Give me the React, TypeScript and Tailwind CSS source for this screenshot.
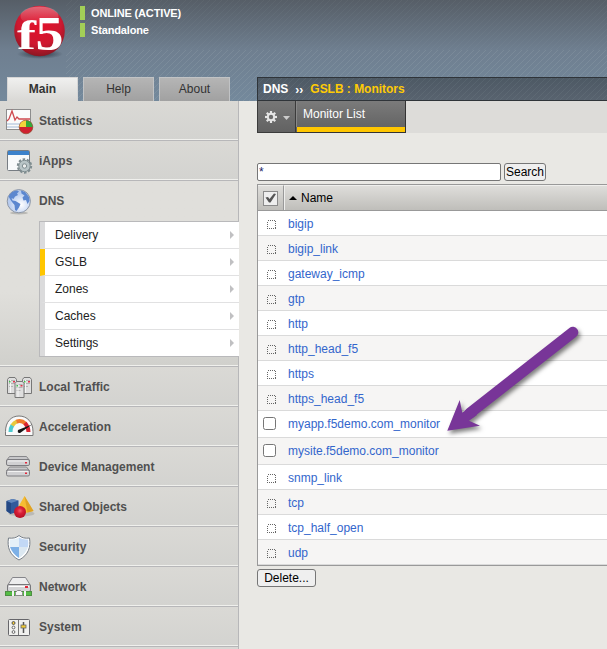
import React from 'react';

const icons: Record<string, React.ReactNode> = {
  Statistics: (
    <>
      <rect x="2.5" y="2.5" width="24" height="20" fill="#fbfbfb" stroke="#8d8d8d" />
      <path d="M3 17h23M3 20h23" stroke="#cfdbea" strokeWidth="2" />
      <path d="M3 14l2-2 3-8 3 9 2-3 2 2h11" fill="none" stroke="#cf4a50" strokeWidth="1.3" />
      <circle cx="22" cy="20" r="6.800" fill="#cf2230" stroke="#8c4a2c" strokeWidth=".7" />
      <path d="M22 20V13.400a6.600 6.600 0 0 1 6.600 6.600z" fill="#35a83a" />
      <path d="M22 20h-6.600a6.600 6.600 0 0 1 6.600-6.600z" fill="#f3d53a" />
    </>
  ),
  iApps: (
    <>
      <rect x="3.500" y="3.500" width="22" height="20" rx="1" fill="#f8fafb" stroke="#777d83" />
      <rect x="4" y="4" width="21" height="4" fill="#3c82cb" />
      <circle cx="20.500" cy="19" r="6.600" fill="none" stroke="#7f8d90" strokeWidth="2.200" strokeDasharray="2.500 1.650" />
      <circle cx="20.500" cy="19" r="5.700" fill="#b8c4c6" stroke="#7f8d90" />
      <circle cx="20.500" cy="19" r="2.200" fill="#eceeed" stroke="#7f8d90" />
    </>
  ),
  DNS: (
    <>
      <ellipse cx="15" cy="26" rx="9" ry="1.500" fill="#b9b8b4" />
      <circle cx="14.800" cy="14.200" r="11.600" fill="url(#globe)" stroke="#8d96a5" />
      <path d="M4.500 9.500c2-4 5-6 8.500-6l2 1-2 2 1 1.500-3 1.500-1.500 2.500-2-1 1 2.500 3 .5 5 3-1.500 3.500-2.500 3.500-1.500-1-.5-5-2.500-3-2-3zM17 3.500l4 1.500 4 5 .5 4-2 3-1.500-4-2.500.5-1-3 2-2-3-2z" fill="#5c87cf" />
    </>
  ),
  'Local Traffic': (
    <>
      {[[3, 4], [18, 4], [10.5, 8]].map(([x, y]) => (
        <g key={x} transform={`translate(${x} ${y})`}>
          <path d="M.5 2.500L2 .5h6l1.500 2v14h-9z" fill="#dedede" stroke="#777" />
          <path d="M2 3.500h6M2 6.500h6M2 9.500h4" stroke="#b3b3b3" />
          <path d="M3.500 3v13" stroke="#f6f6f6" />
          <rect x="6" y="4" width="2" height="1.500" fill="#e3334b" />
          <rect x="2" y="4" width="1.500" height="1.500" fill="#3fc14b" />
        </g>
      ))}
    </>
  ),
  Acceleration: (
    <g transform="translate(0 -1)">
      <path d="M1.500 23.500v-4C1.500 10 7 4 15 4s14 6 14 15.500v4z" fill="#fafafa" stroke="#777" strokeLinejoin="round" />
      <path d="M6.500 20q0-4 2-6.800" fill="none" stroke="#4cc9cf" strokeWidth="4" />
      <path d="M8.300 13.500q1.700-2.800 4.500-4" fill="none" stroke="#e8c83c" strokeWidth="4" />
      <path d="M12.500 9.600q5-1.800 9 2" fill="none" stroke="#f07a2b" strokeWidth="4" />
      <path d="M21 11q3.500 4 3.500 9" fill="none" stroke="#d92331" strokeWidth="4" />
      <path d="M14 18L28 12.500 16 21q-3 .5-2-3" fill="#161616" />
    </g>
  ),
  'Device Management': (
    <>
      {[3, 13.5].map((y) => (
        <g key={y} transform={`translate(0 ${y})`}>
          <path d="M5.500.5h17l3 4H2.500z" fill="#c7c7c9" stroke="#87878a" />
          <rect x="2.500" y="3.500" width="23" height="6" rx="1.500" fill="#d0d0d2" stroke="#7c7c80" />
          <path d="M4 5h20" stroke="#f2f2f2" />
          <rect x="21" y="6" width="2" height="1.500" fill="#e3273b" />
        </g>
      ))}
    </>
  ),
  'Shared Objects': (
    <g transform="translate(.5 3)">
      <ellipse cx="17" cy="17.500" rx="13" ry="3" fill="#bbbab6" />
      <path d="M2 5l6-2 6 1.500v11L6 18l-4-3z" fill="#315a9c" />
      <path d="M2 5l4.500 2L14 4.500 8 3z" fill="#6288bd" />
      <path d="M2 5l4.500 2v11L2 15z" fill="#244884" />
      <path d="M20 0l9 15-8 2-9-3z" fill="#f6bd33" />
      <path d="M20 0l9 15-6 1.500z" fill="#dfa224" />
      <circle cx="15.500" cy="16" r="6" fill="url(#redBall)" />
    </g>
  ),
  Security: (
    <g transform="translate(.5 0)">
      <path d="M14.500 2.500c3 2.500 6 3 10.500 2.500 1.500 9-1 17-10.500 22C5 22 2.500 14 4 5c4.500.5 7.500 0 10.500-2.500z" fill="#fff" stroke="#777f88" />
      <path d="M14.500 4.500v9.500H5.500Q4.800 10 5.500 6.500 11 7 14.500 4.500z" fill="#e4f0f8" />
      <path d="M14.500 4.500v9.500h9q.7-4 0-7.500-5 .5-9-2z" fill="#c2d8f5" />
      <path d="M5.500 14h9v11Q8 21 5.500 14z" fill="#7db0e6" />
      <path d="M23.500 14h-9v11q6.500-4 9-11z" fill="#dce8f1" />
    </g>
  ),
  Network: (
    <>
      <path d="M8.500 4.500h13l5 8H3.500z" fill="#ededee" stroke="#85858a" />
      <rect x="3.500" y="11.500" width="23" height="7" rx="1.500" fill="#d5d5d7" stroke="#77777a" />
      <path d="M5 13.500h20" stroke="#fff" />
      <rect x="21" y="13" width="3" height="2" fill="#e3273b" />
      <rect x="1.500" y="18.500" width="26" height="4" fill="#55bd45" stroke="#4d8e43" />
      <path d="M8 18h2v5H8zM20 18h2v5h-2z" fill="#f3f3f3" />
      <path d="M11.500 22.500v-3l2-2h3l2 2v3z" fill="#f5f5f5" stroke="#8b8b8b" />
    </>
  ),
  System: (
    <>
      <rect x="4.500" y="6.500" width="21" height="16" rx="1" fill="#f0f0ee" stroke="#66666a" />
      <path d="M14.500 7v15" stroke="#777" />
      <circle cx="9.500" cy="10" r="1.500" fill="#f2cb32" stroke="#555" />
      <circle cx="9.500" cy="14.500" r="1.400" fill="#fff" stroke="#666" />
      <circle cx="9.500" cy="19" r="1.400" fill="#fff" stroke="#666" />
      <path d="M19.500 9v11" stroke="#555" strokeWidth="1.500" />
      <rect x="17" y="12" width="5" height="3" fill="#f2cb32" stroke="#666" strokeWidth=".8" />
    </>
  ),
};

const submenu = ['Delivery', 'GSLB', 'Zones', 'Caches', 'Settings'];

const monitors = [
  'bigip', 'bigip_link', 'gateway_icmp', 'gtp', 'http', 'http_head_f5', 'https', 'https_head_f5',
  'myapp.f5demo.com_monitor', 'mysite.f5demo.com_monitor', 'snmp_link', 'tcp', 'tcp_half_open', 'udp',
];

function NavItem({ name, children }: { name: string; children?: React.ReactNode }) {
  return (
    <li
      className={`shrink-0 border-b border-[#b7b7b9] ${
        children ? 'h-[186px] bg-linear-to-b from-[#e0dfdb] from-60% to-[#d0d0cc]' : 'h-10 bg-linear-to-b from-[#dad9d5] to-[#d3d3d0]'
      }`}
    >
      <div className={`border-b border-[#f0f0ed] ${children ? 'h-[185px]' : 'h-[39px]'}`}>
        <div className="flex h-[39px] items-center pl-1">
          <svg width="31" height="29" viewBox="0 0 31 29" className="mt-0.5 shrink-0">{icons[name]}</svg>
          <span className="ml-1 pt-px text-[12px] leading-[14px] font-bold text-[#505050]">{name}</span>
        </div>
        {children}
      </div>
    </li>
  );
}

function Hatch({ id, opacity, className }: { id: string; opacity: number; className: string }) {
  return (
    <svg className={`absolute ${className}`} aria-hidden="true">
      <defs>
        <pattern id={id} width="6" height="6" patternUnits="userSpaceOnUse">
          <path d="M-1 7L7-1M-1 1L1-1M5 7L7 5" stroke="#a5b5b9" strokeWidth=".8" opacity={opacity} />
        </pattern>
      </defs>
      <rect width="100%" height="100%" fill={`url(#${id})`} />
    </svg>
  );
}

function Logo() {
  return (
    <svg width="60" height="60" viewBox="0 0 60 60" className="mt-1 ml-2 shrink-0">
      <defs>
        <radialGradient id="redBall" cx=".5" cy=".4" r=".6">
          <stop offset="0" stopColor="#f2606f" />
          <stop offset=".4" stopColor="#d91f38" />
          <stop offset="1" stopColor="#b30f25" />
        </radialGradient>
        <radialGradient id="logoBall" cx=".5" cy=".35" r=".7">
          <stop offset="0" stopColor="#e2102a" />
          <stop offset=".6" stopColor="#cf1830" />
          <stop offset="1" stopColor="#7c1720" />
        </radialGradient>
        <linearGradient id="logoShine" x2="0" y2="1">
          <stop offset="0" stopColor="#fff" stopOpacity=".35" />
          <stop offset="1" stopColor="#fff" stopOpacity="0" />
        </linearGradient>
        <radialGradient id="globe" cx=".6" cy=".65">
          <stop offset="0" stopColor="#fff" />
          <stop offset="1" stopColor="#b8ccef" />
        </radialGradient>
        <radialGradient id="ballShadow">
          <stop offset="0" stopColor="#1b2731" stopOpacity=".8" />
          <stop offset="1" stopColor="#1b2731" stopOpacity="0" />
        </radialGradient>
      </defs>
      <ellipse cx="32" cy="50" rx="23" ry="5" fill="url(#ballShadow)" />
      <circle cx="31.500" cy="27" r="25.300" fill="url(#logoBall)" />
      <ellipse cx="31.500" cy="12" rx="19" ry="9.500" fill="url(#logoShine)" />
      <text x="9" y="44.500" fontSize="42" fontWeight="700" fill="#fff" fontFamily="'Liberation Serif', serif" textLength="19" lengthAdjust="spacingAndGlyphs">f</text>
      <text x="27.500" y="45.500" fontSize="49" fontWeight="700" fill="#fff" fontFamily="'Liberation Serif', serif" textLength="28" lengthAdjust="spacingAndGlyphs">5</text>
    </svg>
  );
}

export default function App() {
  return (
    <div className="relative flex h-[649px] w-[607px] flex-col overflow-hidden bg-[#e9e8e4] font-['Liberation_Sans',Arial,sans-serif] text-[12px] leading-[14px] text-black">
      <header className="relative h-[101px] shrink-0 bg-linear-to-b from-[#565e67] via-[#6f7f90] via-50% to-[#74899c]">
        <Hatch id="headerHatch" opacity={0.08} className="top-0 left-[66px] h-[50px] w-[541px]" />
        <Hatch id="headerHatchLow" opacity={0.25} className="top-[50px] left-[66px] h-[51px] w-[541px]" />
        <div className="relative flex h-[77px]">
          <Logo />
          <div className="ml-3 flex flex-col gap-[3px] pt-1.5 text-[11px] font-bold tracking-[-0.15px] text-white">
            <div className="flex h-3.5 items-center border-l-[5px] border-[#a3cf57] pl-[6px]">ONLINE (ACTIVE)</div>
            <div className="flex h-3.5 items-center border-l-[5px] border-[#a3cf57] pl-[6px]">Standalone</div>
          </div>
        </div>
        <div className="relative flex h-6">
          <nav className="ml-[7px] flex w-[250px] gap-[5px] text-center text-[#333]">
            <span className="w-[71px] border border-b-0 border-[#d5d5d5] bg-linear-to-b from-[#f0f0ef] to-[#d9d8d5] pt-[4px] font-bold">Main</span>
            <span className="w-[71px] border border-b-0 border-[#c1c3c5] bg-linear-to-b from-[#b5b5b5] to-[#a1a1a1] pt-[4px]">Help</span>
            <span className="w-[71px] border border-b-0 border-[#c1c3c5] bg-linear-to-b from-[#b5b5b5] to-[#a1a1a1] pt-[4px]">About</span>
          </nav>
          <div className="relative flex flex-1 items-center border border-r-0 border-[#2f3439] bg-linear-to-b from-[#4d5964] to-[#58636f] pl-[5px] font-bold text-white">
            <Hatch id="crumbHatch" opacity={0.12} className="inset-0 h-full w-full" />
            <span className="relative">DNS</span>
            <span className="relative ml-[7px] pt-0.5">››</span>
            <span className="relative ml-[7px] tracking-[-0.03px] text-[#ffcb05]">GSLB : Monitors</span>
          </div>
        </div>
      </header>

      <div className="flex h-[548px]">
        <aside className="w-[239px] shrink-0 border-r border-[#b7b7b9]">
          <ul className="flex flex-col">
            <NavItem name="Statistics" />
            <NavItem name="iApps" />
            <NavItem name="DNS">
              <div className="mt-px ml-[39px] w-[200px] border-y border-l border-[#b9b9bb] bg-white">
                {submenu.map((item, i) => (
                  <div key={item} className={`flex items-center border-l-[5px] pr-[5px] pl-2.5 text-[#222] ${item === 'GSLB' ? 'border-l-[#ffc600]' : 'border-l-[#dbdbdc]'} ${i < 4 ? 'h-[27px] border-b border-b-[#e1e1e2]' : 'h-[26px]'}`}>
                    <span className="flex-1">{item}</span>
                    <svg width="4" height="8" viewBox="0 0 4 8"><path d="M0 0l4 4-4 4z" fill="#c0c0c2" /></svg>
                  </div>
                ))}
              </div>
            </NavItem>
            {['Local Traffic', 'Acceleration', 'Device Management', 'Shared Objects', 'Security', 'Network', 'System'].map((n) => (
              <NavItem key={n} name={n} />
            ))}
            <li className="h-0.5 bg-[#d9d8d5]" />
          </ul>
        </aside>

        <main className="ml-[18px] min-w-0 flex-1">
          <div className="flex h-8 bg-[#dddcd9]">
            <div className="flex w-[39px] items-center border-x border-b border-[#3b3b3b] bg-linear-to-b from-[#777] to-[#626262] pl-[7px]">
              <svg width="12" height="12" viewBox="-6 -6 12 12">
                {[0, 45, 90, 135].map((a) => (
                  <path key={a} d="M0-6V6" stroke="#e5e5e5" strokeWidth="2.200" transform={`rotate(${a})`} />
                ))}
                <circle r="4.200" fill="#e5e5e5" />
                <circle r="2.200" fill="#6c6c6c" />
              </svg>
              <svg width="7" height="4" viewBox="0 0 7 4" className="mt-[3px] ml-1.5"><path d="M0 0h7L3.500 4z" fill="#ccc" /></svg>
            </div>
            <div className="flex w-[110px] flex-col border-r border-b border-[#333] bg-linear-to-b from-[#7b7b7b] to-[#606060]">
              <span className="flex-1 border-l border-[#888] pt-1.5 pl-1.5 text-white">Monitor List</span>
              <span className="ml-px h-[5px] bg-[#ffc600]" />
            </div>
          </div>

          <div className="mt-[30px] flex h-[18px] gap-[3px]">
            <input readOnly value="*" className="h-[18px] w-[244px] rounded-[2px] border border-[#767676] bg-white px-px text-[12px] text-[#222266]" />
            <button className="h-[18px] w-[42px] rounded-[3px] border border-[#767676] bg-[#efefef] text-center">Search</button>
          </div>

          <div className="mt-[3px] border-y border-l border-[#999]">
            <div className="flex h-[26px] border-b border-[#999] bg-linear-to-b from-[#e0dfdc] to-[#bfbeba]">
              <div className="flex w-[26px] items-center border-t border-r border-t-[#efefed] border-r-[#999] pl-[5px]">
                <span className="flex h-[15px] w-[15px] items-center justify-center border border-[#8b8b8b] bg-[#eee]">
                  <svg width="11" height="10" viewBox="0 0 11 10"><path d="M.5 4.500L3 4l1.500 2L9 .5l2 .5-5.500 8.500H4z" fill="#555" /></svg>
                </span>
              </div>
              <div className="flex flex-1 items-center border-t border-l border-[#efefed] pl-1">
                <svg width="8" height="4" viewBox="0 0 8 4"><path d="M0 4l4-4 4 4z" fill="#000" /></svg>
                <span className="ml-1">Name</span>
              </div>
            </div>
            {monitors.map((m, i) => {
              const selectable = m.startsWith('my');
              return (
                <div key={m} className={`flex items-center border-b border-[#dadada] ${selectable ? 'h-[27px]' : 'h-[25px] pt-0.5'} ${i % 2 ? 'bg-[#f6f5f4]' : 'bg-white'}`}>
                  <div className="flex w-[30px] items-center">
                    {selectable ? (
                      <span className="-mt-px ml-[5px] h-[13px] w-[13px] rounded-[2.500px] border border-[#767676] bg-white" />
                    ) : (
                      <svg width="9" height="9" viewBox="0 0 9 9" className="ml-[9px]"><rect x=".5" y=".5" width="8" height="8" fill="none" stroke="#666" strokeDasharray="1 1" shapeRendering="crispEdges" /></svg>
                    )}
                  </div>
                  <span className="text-[#3366cc]">{m}</span>
                </div>
              );
            })}
          </div>
          <button className="mt-[3px] h-[18px] w-[59px] rounded-[3px] border border-[#767676] bg-[#efefef] text-center">Delete...</button>
        </main>
      </div>

      <svg className="pointer-events-none absolute top-[315px] left-[435px] drop-shadow-[2px_3px_2px_rgba(0,0,0,0.5)]" width="160" height="125" viewBox="0 0 160 125">
        <path d="M137.800 17.300L35 98" stroke="#783598" strokeWidth="11" strokeLinecap="round" />
        <path d="M12.300 115.700L24.700 85l2.600 12.700L35 92l7 8-8 5.700 11 5z" fill="#783598" />
      </svg>
    </div>
  );
}
